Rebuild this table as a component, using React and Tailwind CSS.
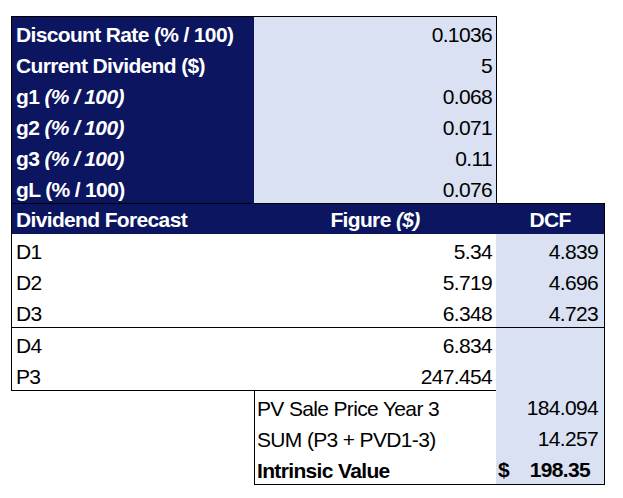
import React from 'react'

const inputs = [
  { label: <>Discount Rate (% / 100)</>, value: '0.1036' },
  { label: <>Current Dividend ($)</>, value: '5' },
  { label: <>g1 <i>(% / 100)</i></>, value: '0.068' },
  { label: <>g2 <i>(% / 100)</i></>, value: '0.071' },
  { label: <>g3 <i>(% / 100)</i></>, value: '0.11' },
  { label: <>gL (% / 100)</>, value: '0.076' },
]

const forecast = [
  { label: 'D1', fig: '5.34', dcf: '4.839' },
  { label: 'D2', fig: '5.719', dcf: '4.696' },
  { label: 'D3', fig: '6.348', dcf: '4.723' },
]

const cell = 'h-[31px] pt-[2px] leading-[31px] whitespace-nowrap'

export default function App() {
  return (
    <div className="min-h-screen bg-white pt-[16px] pl-[11px] text-[21px] tracking-[-0.65px] text-black" style={{ fontFamily: '"Liberation Sans", Arial, sans-serif' }}>
      {/* inputs */}
      <div className="flex w-[486px] border-x border-t border-black">
        <div className="w-[242px] bg-[#0b1560] text-white font-bold">
          {inputs.map((r, i) => (
            <div key={i} className={cell + ' pl-[4px]'}>{r.label}</div>
          ))}
        </div>
        <div className="flex-1 bg-[#d9e1f2]">
          {inputs.map((r, i) => (
            <div key={i} className={cell + ' text-right pr-[4px]'}>{r.value}</div>
          ))}
        </div>
      </div>

      {/* header */}
      <div className="flex h-[31px] w-[594px] border-x border-t border-black bg-[#0b1560] text-white font-bold leading-[30px] pt-[1px]">
        <div className="w-[242px] pl-[4px] whitespace-nowrap">Dividend Forecast</div>
        <div className="w-[242px] text-center">Figure <i>($)</i></div>
        <div className="flex-1 text-center">DCF</div>
      </div>

      {/* D1 - D3 */}
      <div className="w-[594px] border-x border-b border-black">
        {forecast.map(r => (
          <div key={r.label} className="flex">
            <div className={cell + ' w-[242px] pl-[4px]'}>{r.label}</div>
            <div className={cell + ' w-[242px] text-right pr-[4px]'}>{r.fig}</div>
            <div className={cell + ' flex-1 bg-[#d9e1f2] text-right pr-[6px]'}>{r.dcf}</div>
          </div>
        ))}
      </div>

      {/* D4, P3 and summary */}
      <div className="flex w-[594px]">
        <div className="w-[485px]">
          <div className="border-l border-b border-black">
            <div className="flex">
              <div className={cell + ' w-[242px] pl-[4px]'}>D4</div>
              <div className={cell + ' flex-1 text-right pr-[4px]'}>6.834</div>
            </div>
            <div className="flex">
              <div className={cell + ' w-[242px] pl-[4px]'}>P3</div>
              <div className={cell + ' flex-1 text-right pr-[4px]'}>247.454</div>
            </div>
          </div>
          <div className="ml-[243px] border-l border-b border-black">
            <div className={cell + ' pl-[2px]'}>PV Sale Price Year 3</div>
            <div className={cell + ' pl-[2px]'}>SUM (P3 + PVD1-3)</div>
            <div className={cell + ' pl-[2px] font-bold'}>Intrinsic Value</div>
          </div>
        </div>
        <div className="flex-1 bg-[#d9e1f2] border-r border-b border-black">
          <div className="h-[62px]" />
          <div className={cell + ' text-right pr-[6px]'}>184.094</div>
          <div className={cell + ' text-right pr-[6px]'}>14.257</div>
          <div className={cell + ' flex justify-between pl-[2px] pr-[14px] font-bold'}>
            <span>$</span>
            <span>198.35</span>
          </div>
        </div>
      </div>
    </div>
  )
}
